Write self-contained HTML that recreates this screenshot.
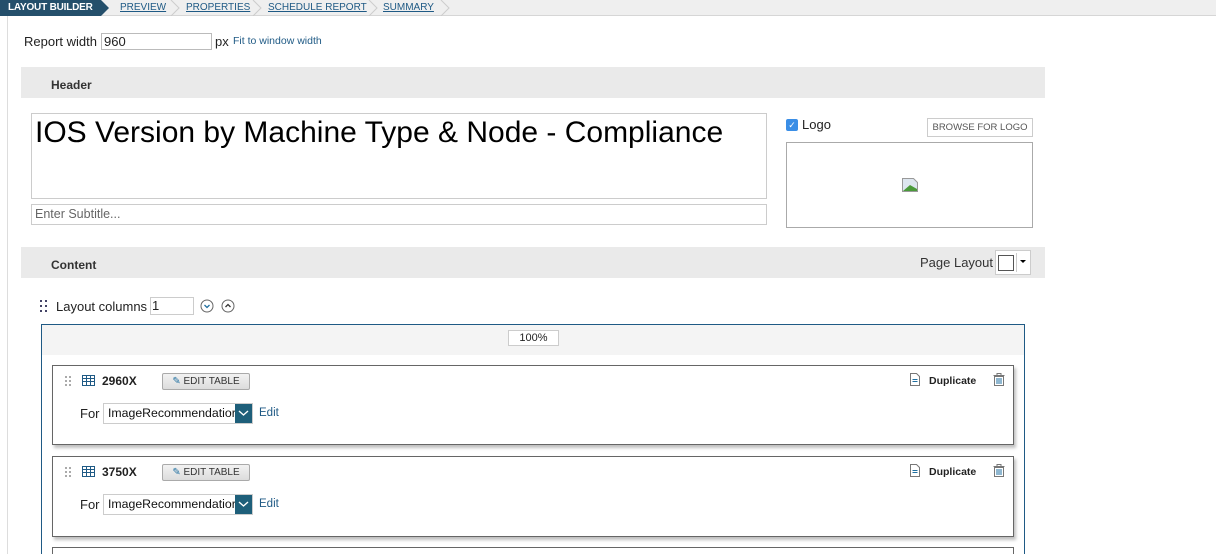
<!DOCTYPE html>
<html style="overflow:hidden;height:554px"><head><meta charset="utf-8"><style>
*{box-sizing:border-box;margin:0;padding:0}
html,body{overflow:hidden}
body{width:1216px;height:554px;overflow:hidden;background:#fff;font-family:"Liberation Sans",sans-serif;color:#222;position:relative}
.a{position:absolute}
.nav{left:0;top:0;width:1216px;height:16px;background:#efefef;border-bottom:1px solid #d6d6d6}
.nav a{position:absolute;top:2px;font-size:10px;color:#1f5a85;text-decoration:underline}
.chev{position:absolute;top:0;width:10px;height:16px}
.card{position:absolute;left:52px;width:962px;border:1px solid #666;background:#fff;box-shadow:2px 3px 3px rgba(0,0,0,.25)}
.btn{position:absolute;width:88px;height:17px;border:1px solid #aaa;border-radius:2px;background:linear-gradient(#f2f2f2,#dcdcdc);font-size:10px;color:#333;text-align:center;line-height:15px}
.sel{position:absolute;width:150px;height:21px;border:1px solid #ccc;font-size:12.3px;line-height:19px;padding-left:4px;color:#111;overflow:hidden;white-space:nowrap}
.sel b{position:absolute;right:0;top:-1px;width:17px;height:21px;background:#1e5f7a}
</style></head><body>
<div class="a" style="left:7px;top:16px;width:1px;height:538px;background:#ddd"></div>
<div class="a nav">
 <div class="a" style="left:0;top:0;width:101px;height:16px;background:#244f6b;color:#fff;font-size:10px;font-weight:bold;line-height:15px;padding-left:8px;letter-spacing:-.2px">LAYOUT BUILDER</div>
 <svg class="a" style="left:101px;top:0" width="10" height="16"><polygon points="0,0 8,8 0,16" fill="#244f6b"/></svg>
 <a style="left:120px">PREVIEW</a>
 <svg class="chev" style="left:170px" viewBox="0 0 10 16"><polyline points="1,0 9,8 1,16" fill="none" stroke="#ccc"/></svg>
 <a style="left:186px">PROPERTIES</a>
 <svg class="chev" style="left:252px" viewBox="0 0 10 16"><polyline points="1,0 9,8 1,16" fill="none" stroke="#ccc"/></svg>
 <a style="left:268px">SCHEDULE REPORT</a>
 <svg class="chev" style="left:368px" viewBox="0 0 10 16"><polyline points="1,0 9,8 1,16" fill="none" stroke="#ccc"/></svg>
 <a style="left:383px">SUMMARY</a>
 <svg class="chev" style="left:440px" viewBox="0 0 10 16"><polyline points="1,0 9,8 1,16" fill="none" stroke="#ccc"/></svg>
</div>
<div class="a" style="left:24px;top:34px;font-size:13px">Report width</div>
<div class="a" style="left:101px;top:33px;width:111px;height:17px;border:1px solid #bbb;font-size:13px;line-height:15px;padding-left:2px">960</div>
<div class="a" style="left:215px;top:34px;font-size:13px">px</div>
<div class="a" style="left:233px;top:35px;font-size:10.5px;color:#1f5a85">Fit to window width</div>

<div class="a" style="left:21px;top:67px;width:1024px;height:31px;background:#eaeaea"></div>
<div class="a" style="left:51px;top:78px;font-size:12px;font-weight:bold;color:#333">Header</div>
<div class="a" style="left:31px;top:113px;width:736px;height:86px;border:1px solid #ccc;font-size:30px;padding:2px 0 0 3px;color:#000">IOS Version by Machine Type &amp; Node - Compliance</div>
<div class="a" style="left:31px;top:204px;width:736px;height:21px;border:1px solid #ccc;font-size:12.5px;color:#666;padding:2px 0 0 3px">Enter Subtitle...</div>
<div class="a" style="left:786px;top:119px;width:12px;height:12px;border-radius:2px;background:#3a8ee6;color:#fff;font-size:9px;text-align:center;line-height:12px">✓</div>
<div class="a" style="left:802px;top:117px;font-size:13px">Logo</div>
<div class="a" style="left:927px;top:118px;width:106px;height:19px;border:1px solid #ccc;font-size:9.5px;color:#555;text-align:center;line-height:17px">BROWSE FOR LOGO</div>
<div class="a" style="left:786px;top:142px;width:247px;height:86px;border:1px solid #aaa"></div>
<svg class="a" style="left:902px;top:178px" width="16" height="14"><path d="M0.5 0.5h11l4 4v9h-15z" fill="#dde6ef" stroke="#999"/><path d="M1 13 L8 7 L15 11 V13 Z" fill="#4a9a3a"/></svg>

<div class="a" style="left:21px;top:247px;width:1024px;height:31px;background:#eaeaea"></div>
<div class="a" style="left:51px;top:258px;font-size:12px;font-weight:bold;color:#333">Content</div>
<div class="a" style="left:920px;top:255px;font-size:13px;color:#333">Page Layout</div>
<div class="a" style="left:995px;top:250px;width:36px;height:25px;background:#fff;border:1px solid #ccc"></div>
<div class="a" style="left:998px;top:255px;width:16px;height:16px;border:1px solid #555"></div>
<div class="a" style="left:1016px;top:253px;width:1px;height:19px;background:#ccc"></div>
<svg class="a" style="left:1020px;top:260px" width="6" height="4"><polygon points="0,0 6,0 3,3" fill="#000"/></svg>

<svg class="a" style="left:40px;top:300px" width="8" height="12"><g fill="#446"><rect x="0" y="0" width="2" height="2"/><rect x="5" y="0" width="2" height="2"/><rect x="0" y="5" width="2" height="2"/><rect x="5" y="5" width="2" height="2"/><rect x="0" y="10" width="2" height="2"/><rect x="5" y="10" width="2" height="2"/></g></svg>
<div class="a" style="left:56px;top:299px;font-size:13px">Layout columns</div>
<div class="a" style="left:150px;top:297px;width:44px;height:18px;border:1px solid #ccc;font-size:13px;line-height:16px;padding-left:1px">1</div>
<svg class="a" style="left:200px;top:299px" width="14" height="14"><circle cx="7" cy="7" r="6" fill="none" stroke="#666"/><polyline points="4.5,6 7,8.5 9.5,6" fill="none" stroke="#1f6fa0" stroke-width="1.3"/></svg>
<svg class="a" style="left:221px;top:299px" width="14" height="14"><circle cx="7" cy="7" r="6" fill="none" stroke="#666"/><polyline points="4.5,8 7,5.5 9.5,8" fill="none" stroke="#333" stroke-width="1.3"/></svg>

<div class="a" style="left:41px;top:324px;width:984px;height:230px;border:1px solid #1f5a85;border-bottom:none"></div>
<div class="a" style="left:42px;top:325px;width:982px;height:30px;background:#f4f4f4"></div>
<div class="a" style="left:508px;top:330px;width:51px;height:16px;border:1px solid #ccc;background:#fff;font-size:11px;text-align:center;line-height:14px">100%</div>

<div class="card" style="top:365px;height:80px"></div>
<div class="card" style="top:456px;height:81px"></div>
<div class="card" style="top:547px;height:7px;border-bottom:none;box-shadow:none"></div>

<svg class="a" style="left:65px;top:376px" width="7" height="12"><g fill="#aaa"><rect x="0" y="0" width="2" height="2"/><rect x="4" y="0" width="2" height="2"/><rect x="0" y="4" width="2" height="2"/><rect x="4" y="4" width="2" height="2"/><rect x="0" y="8" width="2" height="2"/><rect x="4" y="8" width="2" height="2"/></g></svg>
<svg class="a" style="left:82px;top:375px" width="13" height="11"><rect x=".5" y=".5" width="12" height="10" fill="none" stroke="#1f5a85"/><path d="M.5 3.5h12M.5 6.5h12M4.5 .5v10M8.5 .5v10" stroke="#1f5a85"/></svg>
<div class="a" style="left:102px;top:374px;font-size:12px;font-weight:bold">2960X</div>
<div class="btn" style="left:162px;top:373px"><span style="color:#1f6fa0">✎</span> EDIT TABLE</div>
<div class="a" style="left:80px;top:406px;font-size:13px">For</div>
<div class="sel" style="left:103px;top:403px">ImageRecommendatior<b><svg width="17" height="20"><polyline points="4,8 8.5,12 13,8" fill="none" stroke="#fff" stroke-width="1.4"/></svg></b></div>
<div class="a" style="left:259px;top:407px;font-size:11.5px;color:#1f5a85">Edit</div>
<svg class="a" style="left:910px;top:373px" width="10" height="13"><path d="M.5 .5h6l3 3v9h-9z" fill="#fff" stroke="#777"/><path d="M2.5 6.5h5M2.5 8.5h5" stroke="#1f6fa0"/></svg>
<div class="a" style="left:929px;top:375px;font-size:10.5px;font-weight:bold">Duplicate</div>
<svg class="a" style="left:993px;top:373px" width="12" height="13"><path d="M.5 2.5h11M4 2.5V.5h4v2M1.5 3.5h9v9h-9z" fill="none" stroke="#777"/><path d="M4 5v6M6 5v6M8 5v6" stroke="#1f6fa0"/></svg>

<svg class="a" style="left:65px;top:467px" width="7" height="12"><g fill="#aaa"><rect x="0" y="0" width="2" height="2"/><rect x="4" y="0" width="2" height="2"/><rect x="0" y="4" width="2" height="2"/><rect x="4" y="4" width="2" height="2"/><rect x="0" y="8" width="2" height="2"/><rect x="4" y="8" width="2" height="2"/></g></svg>
<svg class="a" style="left:82px;top:466px" width="13" height="11"><rect x=".5" y=".5" width="12" height="10" fill="none" stroke="#1f5a85"/><path d="M.5 3.5h12M.5 6.5h12M4.5 .5v10M8.5 .5v10" stroke="#1f5a85"/></svg>
<div class="a" style="left:102px;top:465px;font-size:12px;font-weight:bold">3750X</div>
<div class="btn" style="left:162px;top:464px"><span style="color:#1f6fa0">✎</span> EDIT TABLE</div>
<div class="a" style="left:80px;top:497px;font-size:13px">For</div>
<div class="sel" style="left:103px;top:494px">ImageRecommendatior<b><svg width="17" height="20"><polyline points="4,8 8.5,12 13,8" fill="none" stroke="#fff" stroke-width="1.4"/></svg></b></div>
<div class="a" style="left:259px;top:498px;font-size:11.5px;color:#1f5a85">Edit</div>
<svg class="a" style="left:910px;top:464px" width="10" height="13"><path d="M.5 .5h6l3 3v9h-9z" fill="#fff" stroke="#777"/><path d="M2.5 6.5h5M2.5 8.5h5" stroke="#1f6fa0"/></svg>
<div class="a" style="left:929px;top:466px;font-size:10.5px;font-weight:bold">Duplicate</div>
<svg class="a" style="left:993px;top:464px" width="12" height="13"><path d="M.5 2.5h11M4 2.5V.5h4v2M1.5 3.5h9v9h-9z" fill="none" stroke="#777"/><path d="M4 5v6M6 5v6M8 5v6" stroke="#1f6fa0"/></svg>
</body></html>
